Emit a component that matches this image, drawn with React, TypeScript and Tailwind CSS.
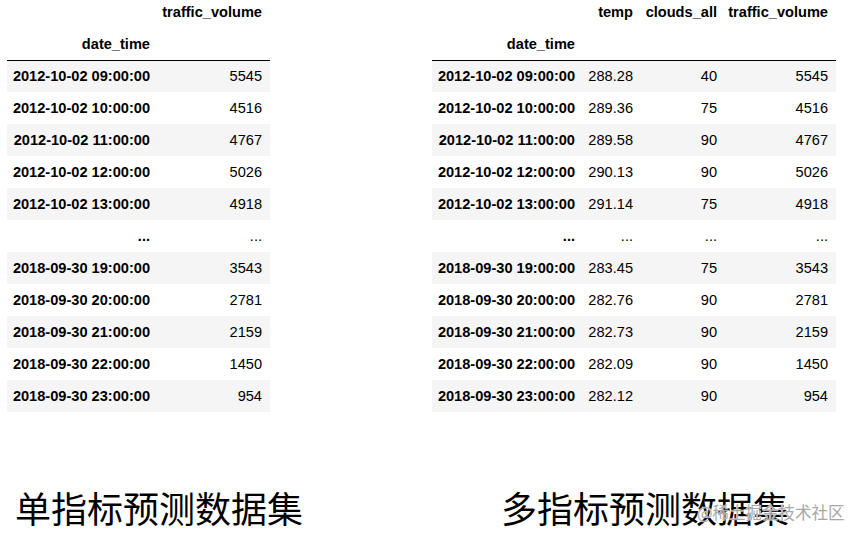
const single: [string, string][] = [
  ['2012-10-02 09:00:00', '5545'],
  ['2012-10-02 10:00:00', '4516'],
  ['2012-10-02 11:00:00', '4767'],
  ['2012-10-02 12:00:00', '5026'],
  ['2012-10-02 13:00:00', '4918'],
  ['...', '...'],
  ['2018-09-30 19:00:00', '3543'],
  ['2018-09-30 20:00:00', '2781'],
  ['2018-09-30 21:00:00', '2159'],
  ['2018-09-30 22:00:00', '1450'],
  ['2018-09-30 23:00:00', '954'],
];

const multi: [string, string, string, string][] = [
  ['2012-10-02 09:00:00', '288.28', '40', '5545'],
  ['2012-10-02 10:00:00', '289.36', '75', '4516'],
  ['2012-10-02 11:00:00', '289.58', '90', '4767'],
  ['2012-10-02 12:00:00', '290.13', '90', '5026'],
  ['2012-10-02 13:00:00', '291.14', '75', '4918'],
  ['...', '...', '...', '...'],
  ['2018-09-30 19:00:00', '283.45', '75', '3543'],
  ['2018-09-30 20:00:00', '282.76', '90', '2781'],
  ['2018-09-30 21:00:00', '282.73', '90', '2159'],
  ['2018-09-30 22:00:00', '282.09', '90', '1450'],
  ['2018-09-30 23:00:00', '282.12', '90', '954'],
];

const tableFont = { fontFamily: '"Liberation Sans", Helvetica, Arial, sans-serif' };

function SingleTable() {
  return (
    <table className="border-collapse text-[14.6px] leading-[16px] text-black" style={tableFont}>
      <thead>
        <tr className="h-[28px]">
          <th className="w-[149px]" />
          <th className="w-[114px] pr-[8px] pb-[8px] text-right align-bottom font-bold">traffic_volume</th>
        </tr>
        <tr className="h-[32px] border-b border-black">
          <th className="pr-[6px] text-right align-middle font-bold">date_time</th>
          <th />
        </tr>
      </thead>
      <tbody>
        {single.map(([d, v], i) => (
          <tr key={i} className={i % 2 === 0 ? 'h-[32px] bg-[#f5f5f5]' : 'h-[32px] bg-white'}>
            <th className="pr-[6px] text-right font-bold">{d}</th>
            <td className="pr-[8px] text-right">{v}</td>
          </tr>
        ))}
      </tbody>
    </table>
  );
}

function MultiTable() {
  return (
    <table className="border-collapse text-[14.6px] leading-[16px] text-black" style={tableFont}>
      <thead>
        <tr className="h-[28px]">
          <th className="w-[149px]" />
          <th className="w-[60px] pr-[8px] pb-[8px] text-right align-bottom font-bold">temp</th>
          <th className="w-[84px] pr-[8px] pb-[8px] text-right align-bottom font-bold">clouds_all</th>
          <th className="w-[111px] pr-[8px] pb-[8px] text-right align-bottom font-bold">traffic_volume</th>
        </tr>
        <tr className="h-[32px] border-b border-black">
          <th className="pr-[6px] text-right align-middle font-bold">date_time</th>
          <th />
          <th />
          <th />
        </tr>
      </thead>
      <tbody>
        {multi.map(([d, t, c, v], i) => (
          <tr key={i} className={i % 2 === 0 ? 'h-[32px] bg-[#f5f5f5]' : 'h-[32px] bg-white'}>
            <th className="pr-[6px] text-right font-bold">{d}</th>
            <td className="pr-[8px] text-right">{t}</td>
            <td className="pr-[8px] text-right">{c}</td>
            <td className="pr-[8px] text-right">{v}</td>
          </tr>
        ))}
      </tbody>
    </table>
  );
}

export default function App() {
  return (
    <div className="relative h-[540px] w-[862px] overflow-hidden bg-white">
      <div className="flex">
        <div className="ml-[7px]">
          <SingleTable />
        </div>
        <div className="ml-[162px]">
          <MultiTable />
        </div>
      </div>
      <div
        className="mt-[77px] flex text-[36px] leading-[36px] text-black"
        style={{ fontFamily: '"Noto Sans CJK SC", sans-serif' }}
      >
        <div className="ml-[15px] w-[486px]">单指标预测数据集</div>
        <div>多指标预测数据集</div>
      </div>
      <div
        className="absolute left-[697px] top-[502px] text-[16.5px] leading-[20px] text-[#a8a8a8]"
        style={{ fontFamily: '"Noto Sans CJK SC", sans-serif', textShadow: '0 0 1px #fff, 0 0 1px #fff' }}
      >
        @稀土掘金技术社区
      </div>
    </div>
  );
}
